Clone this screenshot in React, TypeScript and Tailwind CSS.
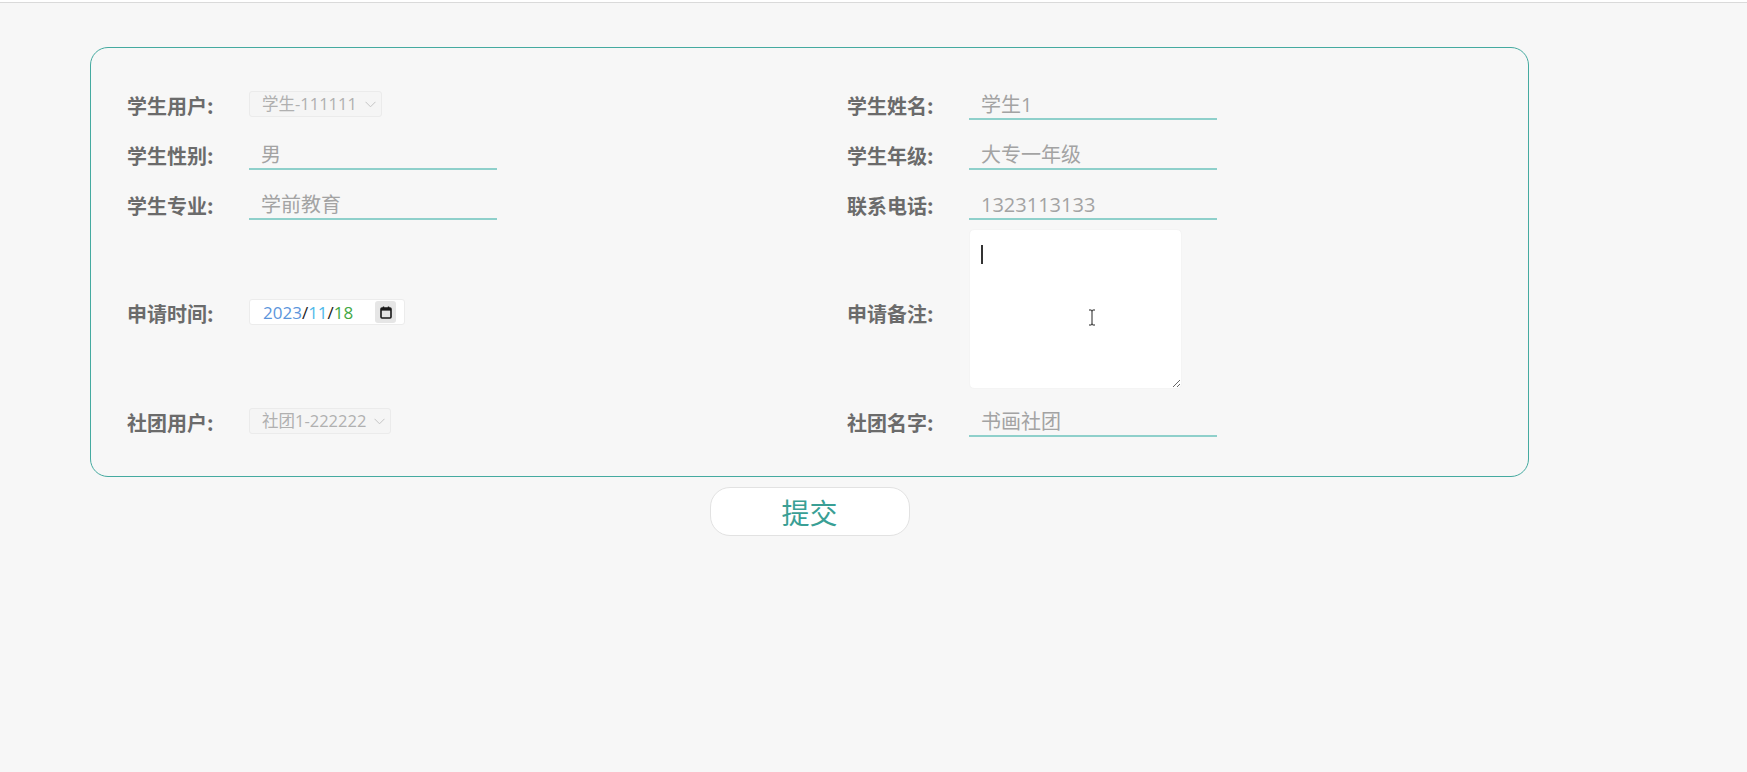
import React from "react";

const FONT = '"Noto Sans CJK SC", "Noto Sans", sans-serif';
const VFONT = '"Open Sans", "Noto Sans CJK SC", sans-serif';

function Label({ children }: { children: React.ReactNode }) {
  return (
    <div className="w-[122px] shrink-0 pt-[3px] text-[20px] font-bold text-[#6b6b6b] leading-none">
      {children}
    </div>
  );
}

function UnderInput({ value }: { value: string }) {
  return (
    <div
      className="w-[248px] h-[32px] border-b-2 border-[#8fd0cb] pl-[12px] pt-[3px] flex items-center text-[20px] text-[#a3a3a3] leading-none"
      style={{ fontFamily: VFONT }}
    >
      {value}
    </div>
  );
}

function Chevron() {
  return (
    <svg width="11" height="7" viewBox="0 0 11 7" className="shrink-0">
      <polyline points="0.5,0.8 5.5,5.8 10.5,0.8" fill="none" stroke="#c4c4c4" strokeWidth="1" />
    </svg>
  );
}

function FakeSelect({ value, width }: { value: string; width: string }) {
  return (
    <div
      className={`${width} h-[26px] rounded-[3px] border border-[#ebebeb] bg-[#f5f5f5] pl-[12px] pr-[5px] flex items-center justify-between text-[16.5px] text-[#b0b0b0] leading-none`}
      style={{ fontFamily: VFONT }}
    >
      <span>{value}</span>
      <Chevron />
    </div>
  );
}

function DateBox() {
  return (
    <div
      className="w-[156px] h-[26px] rounded-[3px] border border-[#ececec] bg-white pl-[13px] pr-[8px] flex items-center justify-between text-[17px] leading-none"
      style={{ fontFamily: VFONT }}
    >
      <span>
        <span className="text-[#5b95dc]">2023</span>
        <span className="text-[#222]">/</span>
        <span className="text-[#4fb9ea]">11</span>
        <span className="text-[#222]">/</span>
        <span className="text-[#43a845]">18</span>
      </span>
      <div className="w-[21px] h-[22px] rounded-[3px] bg-[#e6e6e6] flex items-center justify-center">
        <svg width="12" height="13" viewBox="0 0 12 13">
          <rect x="1" y="2" width="10" height="10" rx="1" fill="none" stroke="#1a1a1a" strokeWidth="1.6" />
          <rect x="1" y="2" width="10" height="2.6" fill="#1a1a1a" />
          <line x1="3.5" y1="0.5" x2="3.5" y2="2.5" stroke="#1a1a1a" strokeWidth="1.4" />
          <line x1="8.5" y1="0.5" x2="8.5" y2="2.5" stroke="#1a1a1a" strokeWidth="1.4" />
        </svg>
      </div>
    </div>
  );
}

function Row({
  left,
  right,
  className,
}: {
  left: React.ReactNode;
  right: React.ReactNode;
  className: string;
}) {
  return (
    <div className={`grid grid-cols-[720px_1fr] ${className}`}>
      <div className="flex items-center">{left}</div>
      <div className="flex items-center">{right}</div>
    </div>
  );
}

export default function App() {
  return (
    <div className="min-h-screen w-full bg-[#f7f7f7]" style={{ fontFamily: FONT }}>
      <div className="h-[2px] bg-white" />
      <div className="h-px bg-[#dadada]" />
      <div className="pl-[90px] pt-[44px]">
        <div className="w-[1439px] rounded-[18px] border border-[#45aaa0] pl-[36px] pt-[40px] pb-[39px]">
          <Row
            className="h-[32px]"
            left={
              <>
                <Label>学生用户:</Label>
                <FakeSelect value="学生-111111" width="w-[133px]" />
              </>
            }
            right={
              <>
                <Label>学生姓名:</Label>
                <UnderInput value="学生1" />
              </>
            }
          />
          <Row
            className="h-[32px] mt-[18px]"
            left={
              <>
                <Label>学生性别:</Label>
                <UnderInput value="男" />
              </>
            }
            right={
              <>
                <Label>学生年级:</Label>
                <UnderInput value="大专一年级" />
              </>
            }
          />
          <Row
            className="h-[32px] mt-[18px]"
            left={
              <>
                <Label>学生专业:</Label>
                <UnderInput value="学前教育" />
              </>
            }
            right={
              <>
                <Label>联系电话:</Label>
                <UnderInput value="1323113133" />
              </>
            }
          />
          <Row
            className="h-[166px] mt-[9px]"
            left={
              <>
                <Label>申请时间:</Label>
                <DateBox />
              </>
            }
            right={
              <>
                <Label>申请备注:</Label>
                <div className="relative w-[213px] h-[160px] mb-[6px]">
                  <textarea
                    className="block w-[213px] h-[160px] rounded-[5px] border border-[#f4f4f4] bg-white outline-none"
                    defaultValue=""
                  />
                  <div className="absolute left-[12px] top-[16px] w-[1.5px] h-[19px] bg-[#333]" />
                  <svg
                    className="absolute left-[119px] top-[80px]"
                    width="8"
                    height="17"
                    viewBox="0 0 8 17"
                  >
                    <path d="M1 1 H3 Q4 1 4 2.5 V14.5 Q4 16 3 16 H1 M7 1 H5 Q4 1 4 2.5 M4 14.5 Q4 16 5 16 H7" fill="none" stroke="#222" strokeWidth="1" />
                  </svg>
                </div>
              </>
            }
          />
          <Row
            className="h-[32px] mt-[10px]"
            left={
              <>
                <Label>社团用户:</Label>
                <FakeSelect value="社团1-222222" width="w-[142px]" />
              </>
            }
            right={
              <>
                <Label>社团名字:</Label>
                <UnderInput value="书画社团" />
              </>
            }
          />
        </div>
        <div className="w-[1439px] flex justify-center mt-[10px]">
          <button className="w-[200px] h-[49px] rounded-[20px] border border-[#e2e2e2] bg-white text-[28px] text-[#3a9f95] leading-none">
            提交
          </button>
        </div>
      </div>
    </div>
  );
}
